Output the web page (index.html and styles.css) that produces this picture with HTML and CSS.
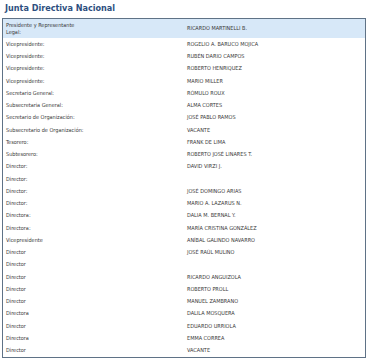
FILE: index.html
```html
<!DOCTYPE html>
<html lang="es">
<head>
<meta charset="utf-8">
<title>Junta Directiva Nacional</title>
<link rel="stylesheet" href="styles.css">
</head>
<body>
<div class="page">
  <h1 class="title">Junta Directiva Nacional</h1>
  <table class="board">
    <tr class="head"><td class="role">Presidente y Representante<br>Legal:</td><td class="name">RICARDO MARTINELLI B.</td></tr>
    <tr><td class="role">Vicepresidente:</td><td class="name">ROGELIO A. BARUCO MOJICA</td></tr>
    <tr><td class="role">Vicepresidente:</td><td class="name">RUBÉN DARIO CAMPOS</td></tr>
    <tr><td class="role">Vicepresidente:</td><td class="name">ROBERTO HENRIQUEZ</td></tr>
    <tr><td class="role">Vicepresidente:</td><td class="name">MARIO MILLER</td></tr>
    <tr><td class="role">Secretario General:</td><td class="name">RÓMULO ROUX</td></tr>
    <tr><td class="role">Subsecretaria General:</td><td class="name">ALMA CORTES</td></tr>
    <tr><td class="role">Secretario de Organización:</td><td class="name">JOSÉ PABLO RAMOS</td></tr>
    <tr><td class="role">Subsecretario de Organización:</td><td class="name">VACANTE</td></tr>
    <tr><td class="role">Tesorero:</td><td class="name">FRANK DE LIMA</td></tr>
    <tr><td class="role">Subtesorero:</td><td class="name">ROBERTO JOSÉ LINARES T.</td></tr>
    <tr><td class="role">Director:</td><td class="name">DAVID VIRZI J.</td></tr>
    <tr><td class="role">Director:</td><td class="name"></td></tr>
    <tr><td class="role">Director:</td><td class="name">JOSÉ DOMINGO ARIAS</td></tr>
    <tr><td class="role">Director:</td><td class="name">MARIO A. LAZARUS N.</td></tr>
    <tr><td class="role">Directora:</td><td class="name">DALIA M. BERNAL Y.</td></tr>
    <tr><td class="role">Directora:</td><td class="name">MARÍA CRISTINA GONZÁLEZ</td></tr>
    <tr><td class="role">Vicepresidente</td><td class="name">ANÍBAL GALINDO NAVARRO</td></tr>
    <tr><td class="role">Director</td><td class="name">JOSÉ RAÚL MULINO</td></tr>
    <tr><td class="role">Director</td><td class="name"></td></tr>
    <tr><td class="role">Director</td><td class="name">RICARDO ANGUIZOLA</td></tr>
    <tr><td class="role">Director</td><td class="name">ROBERTO PROLL</td></tr>
    <tr><td class="role">Director</td><td class="name">MANUEL ZAMBRANO</td></tr>
    <tr><td class="role">Directora</td><td class="name">DALILA MOSQUERA</td></tr>
    <tr><td class="role">Director</td><td class="name">EDUARDO URRIOLA</td></tr>
    <tr><td class="role">Directora</td><td class="name">EMMA CORREA</td></tr>
    <tr><td class="role">Director</td><td class="name">VACANTE</td></tr>
  </table>
</div>
</body>
</html>
```
FILE: styles.css
```css
html, body {
  margin: 0;
  padding: 0;
  background: #ffffff;
}

.page {
  padding: 2px 0 0 2px;
  width: 364px;
}

.title {
  margin: 0 0 0 3px;
  height: 16px;
  font-family: "DejaVu Sans Condensed", "DejaVu Sans", sans-serif;
  font-weight: bold;
  font-size: 9px;
  line-height: 12px;
  color: #2d4f80;
}

.board {
  width: 364px;
  border-collapse: collapse;
  border: 1.5px solid #5f7286;
  font-family: "DejaVu Sans Condensed", "DejaVu Sans", sans-serif;
  font-size: 5.5px;
  color: #3a3a3a;
}

.board td {
  height: 12.25px;
  padding: 0 0 0 3px;
  vertical-align: middle;
  line-height: 6.5px;
}

.board .role {
  width: 178px;
}

.board .head td {
  height: 19px;
  background: #d7e8f8;
}
```
